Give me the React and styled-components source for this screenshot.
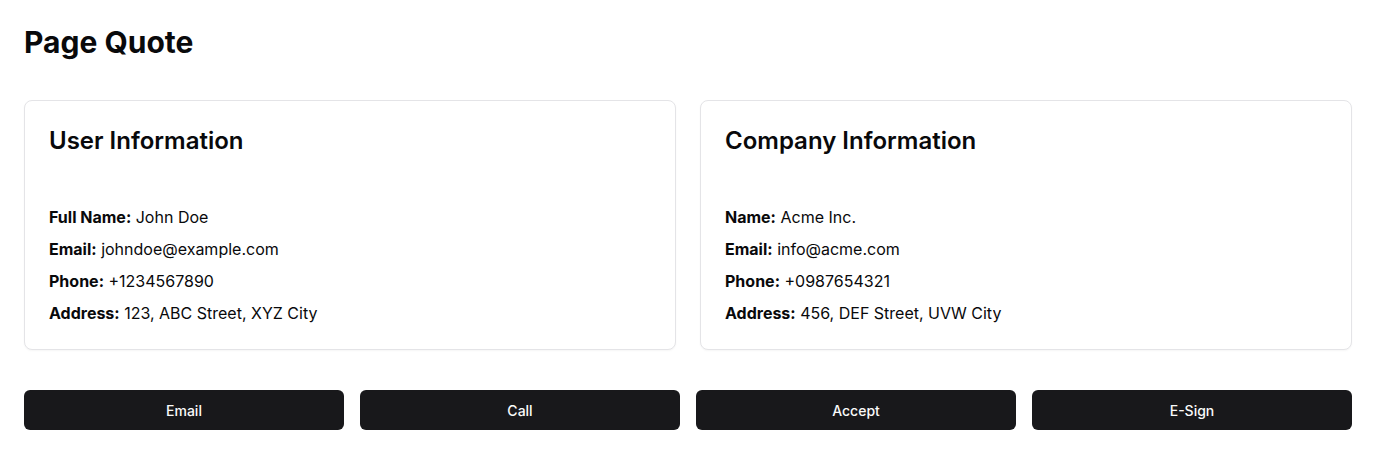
import React from "react";
import styled, { createGlobalStyle } from "styled-components";

const GlobalStyle = createGlobalStyle`
  * { box-sizing: border-box; }
  body {
    margin: 0;
    background: #fff;
    color: #09090b;
    font-family: Inter, "Noto Sans", sans-serif;
  }
`;

const Page = styled.div`
  padding: 24px;
  display: flex;
  flex-direction: column;
  gap: 40px;
`;

const Title = styled.h1`
  margin: 0;
  font-size: 30px;
  line-height: 36px;
  font-weight: 700;
`;

const CardGrid = styled.div`
  display: grid;
  grid-template-columns: 1fr 1fr;
  gap: 24px;
`;

const Card = styled.div`
  border: 1px solid #e4e4e7;
  border-radius: 8px;
  background: #fff;
  box-shadow: 0 1px 2px rgba(0, 0, 0, 0.04);
  padding: 24px;
`;

const CardTitle = styled.h2`
  margin: 0 0 48px;
  font-size: 24px;
  line-height: 32px;
  font-weight: 600;
`;

const InfoList = styled.div`
  display: flex;
  flex-direction: column;
  gap: 8px;
`;

const InfoRow = styled.p`
  margin: 0;
  font-size: 16px;
  line-height: 24px;
`;

const Label = styled.strong`
  font-weight: 700;
`;

const ButtonRow = styled.div`
  display: grid;
  grid-template-columns: repeat(4, 1fr);
  gap: 16px;
`;

const ActionButton = styled.button`
  height: 40px;
  border: none;
  border-radius: 6px;
  background: #18181b;
  color: #fafafa;
  font-family: Inter, "Noto Sans", sans-serif;
  font-size: 14px;
  font-weight: 500;
  cursor: pointer;
`;

const cards = [
  {
    title: "User Information",
    rows: [
      ["Full Name:", "John Doe"],
      ["Email:", "johndoe@example.com"],
      ["Phone:", "+1234567890"],
      ["Address:", "123, ABC Street, XYZ City"],
    ],
  },
  {
    title: "Company Information",
    rows: [
      ["Name:", "Acme Inc."],
      ["Email:", "info@acme.com"],
      ["Phone:", "+0987654321"],
      ["Address:", "456, DEF Street, UVW City"],
    ],
  },
];

const actions = ["Email", "Call", "Accept", "E-Sign"];

const App = () => {
  return (
    <>
      <GlobalStyle />
      <Page>
        <Title>Page Quote</Title>
        <CardGrid>
          {cards.map((card) => (
            <Card key={card.title}>
              <CardTitle>{card.title}</CardTitle>
              <InfoList>
                {card.rows.map(([label, value]) => (
                  <InfoRow key={label}>
                    <Label>{label}</Label> {value}
                  </InfoRow>
                ))}
              </InfoList>
            </Card>
          ))}
        </CardGrid>
        <ButtonRow>
          {actions.map((a) => (
            <ActionButton key={a}>{a}</ActionButton>
          ))}
        </ButtonRow>
      </Page>
    </>
  );
};

export default App;
